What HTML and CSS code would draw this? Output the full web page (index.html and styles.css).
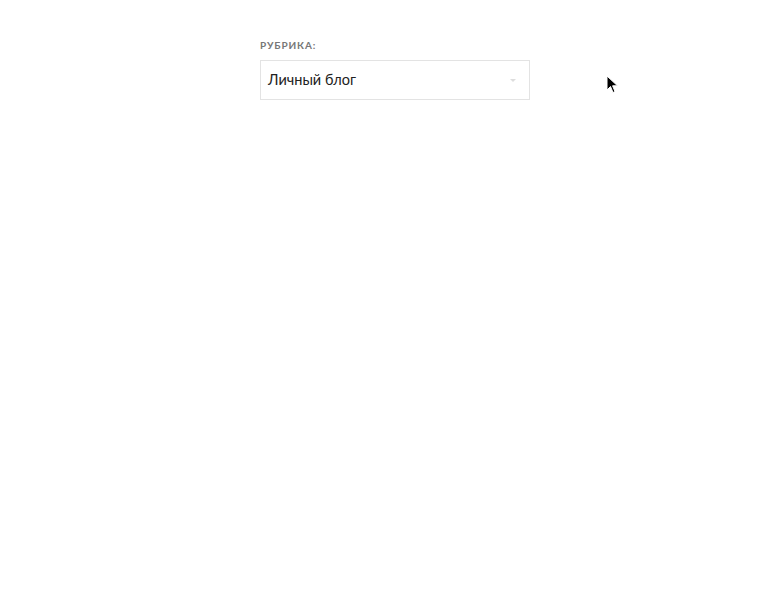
FILE: index.html
```html
<!DOCTYPE html>
<html lang="ru">
<head>
<meta charset="utf-8">
<link rel="stylesheet" href="styles.css">
</head>
<body>
<div class="page">
  <div class="field">
    <div class="label">РУБРИКА:</div>
    <div class="select">
      <span class="value">Личный блог</span>
      <span class="arrow"></span>
    </div>
  </div>
</div>
<svg class="cursor" width="14" height="20" viewBox="0 0 14 20">
  <path d="M1 1 L1 15 L4.5 11.5 L7 17.5 L9 16.6 L6.6 10.8 L11.5 10.8 Z" fill="#000" stroke="#fff" stroke-width="1"/>
</svg>
</body>
</html>
```
FILE: styles.css
```css
html, body {
  margin: 0;
  padding: 0;
  background: #fff;
}
.page {
  width: 780px;
  height: 600px;
  padding-top: 39px;
  padding-left: 260px;
  box-sizing: border-box;
}
.field {
  width: 270px;
}
.label {
  font-family: Lato, "Open Sans", sans-serif;
  font-weight: 700;
  font-size: 10px;
  letter-spacing: 0.85px;
  color: #777;
  line-height: 12px;
  margin-bottom: 9px;
}
.select {
  height: 40px;
  border: 1px solid #e3e3e3;
  box-sizing: border-box;
  display: flex;
  align-items: center;
  justify-content: space-between;
  padding: 0 13px 2px 7px;
}
.value {
  font-family: Lato, "Open Sans", sans-serif;
  font-size: 14.5px;
  color: #222;
}
.arrow {
  width: 0;
  height: 0;
  margin-top: 2px;
  border-left: 3px solid transparent;
  border-right: 3px solid transparent;
  border-top: 3px solid #ddd;
}
.cursor {
  position: absolute;
  left: 606px;
  top: 75px;
}
```
